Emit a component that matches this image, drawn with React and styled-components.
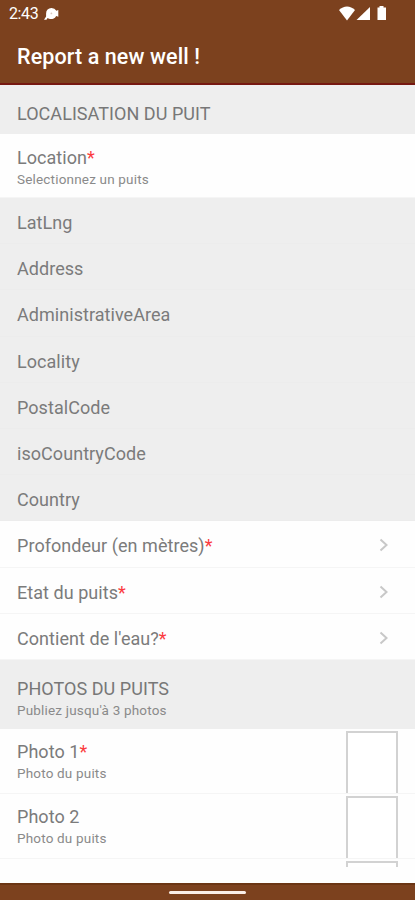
import styled, { createGlobalStyle } from 'styled-components'

const GlobalStyle = createGlobalStyle`
  * {
    box-sizing: border-box;
  }
  body {
    margin: 0;
    background: #fff;
    font-family: Roboto, 'Liberation Sans', sans-serif;
  }
`

const Screen = styled.div`
  height: 900px;
  display: flex;
  flex-direction: column;
  overflow: hidden;
  background: #fefefe;
`

const Header = styled.header`
  flex: none;
  height: 85px;
  background: #7c411e;
  border-bottom: 2px solid #761811;
  color: #fff;
`

const StatusBar = styled.div`
  height: 28px;
  padding: 0 28px 0 9px;
  display: flex;
  align-items: center;
  justify-content: space-between;
`

const StatusGroup = styled.div`
  display: flex;
  align-items: center;
  svg {
    display: block;
  }
`

const Clock = styled.span`
  font-size: 16px;
  line-height: 20px;
  letter-spacing: -0.4px;
  margin-right: 6px;
`

const Title = styled.h1`
  margin: 0;
  padding: 16px 17px 0;
  font-size: 21.5px;
  line-height: 26px;
  font-weight: 500;
  letter-spacing: 0.1px;
`

const Content = styled.main`
  flex: none;
  height: 782px;
  overflow: hidden;
`

const Section = styled.section`
  height: ${(p) => (p.$tall ? 69 : 49)}px;
  padding: 18px 17px 0;
  background: #eee;
  color: #777;
`

const Row = styled.div`
  height: ${(p) => p.$height || 46.2}px;
  padding: ${(p) => p.$top || 14}px 17px 0;
  display: flex;
  justify-content: space-between;
  background: ${(p) => (p.$disabled ? '#eee' : '#fefefe')};
  border-bottom: 1px solid ${(p) => (p.$disabled ? '#ececec' : '#f5f5f5')};
  color: #7b7b7b;
`

const Label = styled.div`
  font-size: 18px;
  line-height: 22px;
  letter-spacing: 0.05px;
  white-space: nowrap;
`

const Hint = styled.div`
  font-size: 13.5px;
  line-height: 18px;
  margin-top: 1px;
  letter-spacing: 0.18px;
  color: #8a8a8a;
  white-space: nowrap;
`

const Star = styled.span`
  color: #fb3b3f;
`

const Chevron = styled.svg`
  width: 10px;
  height: 14px;
  margin: 3px 9px 0 0;
  flex: none;
`

const PhotoRow = styled(Row)`
  height: 65px;
  padding: 12px 17px 0;
`

const PhotoBox = styled.div`
  flex: none;
  width: 52px;
  height: 62px;
  margin: -10px 0 0 auto;
  border: 2px solid #d2d2d2;
  border-bottom: 0;
  background: #fff;
`

const NavBar = styled.footer`
  flex: none;
  margin-top: auto;
  height: 17px;
  display: flex;
  justify-content: center;
  align-items: center;
  background: #7c411e;
  border-top: 2px solid #6b3514;
`

const Handle = styled.div`
  width: 77px;
  height: 3px;
  border-radius: 2px;
  background: #faeee8;
`

const addressFields = [
  'LatLng',
  'Address',
  'AdministrativeArea',
  'Locality',
  'PostalCode',
  'isoCountryCode',
  'Country',
]

const questions = ['Profondeur (en mètres)', 'Etat du puits', "Contient de l'eau?"]

const photos = [
  { label: 'Photo 1', hint: 'Photo du puits', required: true },
  { label: 'Photo 2', hint: 'Photo du puits' },
]

const NotificationIcon = () => (
  <svg width="15" height="14" viewBox="0 0 15 14">
    <path
      fill="#fff"
      d="M7.400 1a5.700 5.500 0 0 1 5 2.700L14.300 3v6.800l-2.100-.9A5.600 5.300 0 0 1 5 11.700L3.600 11 2.500 12.800H0l2.100-3.200V6.500A5.300 5.300 0 0 1 7.400 1z"
    />
    <circle cx="7.400" cy="6.400" r="0.900" fill="#d9c7be" />
  </svg>
)

const SignalIcons = () => (
  <svg width="48" height="16" viewBox="0 0 48 16">
    <g fill="#fff">
      <path d="M0 4.100C4.700-.6 11.300-.6 16 4.100L8 14.500z" />
      <path d="M31 1v13H17.500z" />
      <path d="M40.500 0h4v1.500h2.500v12.500h-8.500V1.500h2z" />
    </g>
  </svg>
)

const App = () => (
  <>
    <GlobalStyle />
    <Screen>
      <Header>
        <StatusBar>
          <StatusGroup>
            <Clock>2:43</Clock>
            <NotificationIcon />
          </StatusGroup>
          <StatusGroup>
            <SignalIcons />
          </StatusGroup>
        </StatusBar>
        <Title>Report a new well !</Title>
      </Header>
      <Content>
        <Section>
          <Label>LOCALISATION DU PUIT</Label>
        </Section>
        <Row $height={64} $top={13}>
          <div>
            <Label>
              Location<Star>*</Star>
            </Label>
            <Hint>Selectionnez un puits</Hint>
          </div>
        </Row>
        {addressFields.map((name) => (
          <Row key={name} $disabled>
            <Label>{name}</Label>
          </Row>
        ))}
        {questions.map((question) => (
          <Row key={question}>
            <Label>
              {question}
              <Star>*</Star>
            </Label>
            <Chevron viewBox="0 0 10 14">
              <path d="M1.500 1.500L7.500 7l-6 5.500" fill="none" stroke="#c8c8c8" strokeWidth="2" />
            </Chevron>
          </Row>
        ))}
        <Section $tall>
          <Label>PHOTOS DU PUITS</Label>
          <Hint>Publiez jusqu'à 3 photos</Hint>
        </Section>
        {photos.map(({ label, hint, required }) => (
          <PhotoRow key={label}>
            <div>
              <Label>
                {label}
                {required && <Star>*</Star>}
              </Label>
              <Hint>{hint}</Hint>
            </div>
            <PhotoBox />
          </PhotoRow>
        ))}
        {/* only the top edge of the third box shows above the nav bar */}
        <PhotoRow>
          <PhotoBox />
        </PhotoRow>
      </Content>
      <NavBar>
        <Handle />
      </NavBar>
    </Screen>
  </>
)

export default App
